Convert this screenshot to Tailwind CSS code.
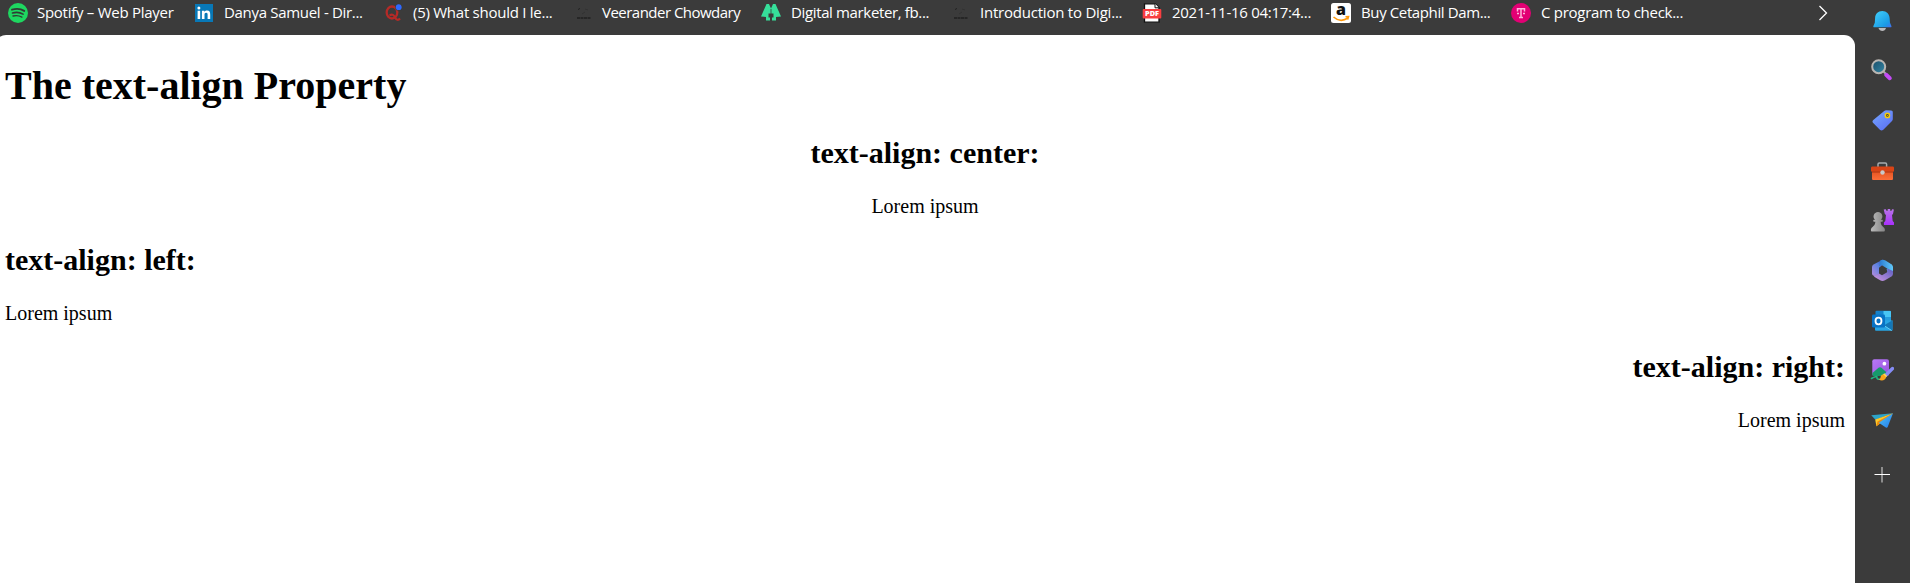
<!DOCTYPE html>
<html lang="en">
<head>
<meta charset="utf-8">
<title>The text-align Property</title>
<script src="https://cdn.jsdelivr.net/npm/@tailwindcss/browser@4"></script>
</head>
<body class="h-screen overflow-hidden bg-[#3b3b3b]">
<div class="flex h-full">
  <div class="flex w-[1855px] flex-col">
    <nav class="flex h-[35px] shrink-0 items-start pl-2 pt-[3px] font-['Open_Sans',sans-serif] text-[15px] leading-[18px] text-white whitespace-nowrap">
      <a class="flex w-[186px] gap-[9px]">
        <svg class="size-5 shrink-0" viewBox="0 0 20 20"><circle cx="10" cy="10" r="10" fill="#1ed760"/><g fill="none" stroke="#303b34" stroke-linecap="round"><path d="M4 6.700c4-1.200 9-.8 12.200 1.200" stroke-width="1.900"/><path d="M4.500 10c3.500-1 7.600-.6 10.600 1.100" stroke-width="1.600"/><path d="M5 13c3-.8 6.200-.5 8.900 1.100" stroke-width="1.300"/></g></svg>
        <span class="tracking-[-0.27px]">Spotify – Web Player</span>
      </a>
      <a class="flex w-[190px] gap-[10px]">
        <svg class="size-5 shrink-0" viewBox="0 0 20 20"><rect x="1" y="1" width="18" height="18" fill="#0878b7"/><g fill="#fff"><circle cx="4.900" cy="5" r="1.500"/><path d="M3.600 7.700h2.600V16H3.600zM7.900 7.700h2.500v1.200c.6-1 1.500-1.400 2.700-1.400 2.500 0 3.100 1.600 3.100 3.900V16h-2.600v-4.200c0-1.200-.2-2.100-1.400-2.100-1.300 0-1.700.9-1.700 2.100V16H7.900z"/></g></svg>
        <span class="tracking-[-0.31px]">Danya Samuel - Dir...</span>
      </a>
      <a class="flex w-[190px] gap-[9px]">
        <svg class="size-5 shrink-0" viewBox="0 0 20 20"><ellipse cx="8" cy="9.500" rx="5.300" ry="6" fill="none" stroke="#b52a27" stroke-width="2.300"/><path d="M5.500 12.500c3-2 4.500-.2 5.700 2.200 1.100 2.300 3 3.100 4.800.8" fill="none" stroke="#b52a27" stroke-width="2.100"/><circle cx="14.700" cy="4.200" r="3.500" fill="#3b3b3b"/><circle cx="14.700" cy="4.200" r="2.900" fill="#2e69ff"/></svg>
        <span class="tracking-[-0.26px]">(5) What should I le...</span>
      </a>
      <a class="flex w-[187px] gap-[8px]">
        <svg class="size-5 shrink-0" viewBox="0 0 20 20"><path d="M3 15h14" stroke="#202020" stroke-width="1.500" stroke-dasharray="3 .5"/><path d="M4 6.500l2-1" stroke="#202020"/><path d="M11 6l3 1M8 11l3-2" stroke="#323232"/></svg>
        <span class="tracking-[-0.52px]">Veerander Chowdary</span>
      </a>
      <a class="flex w-[191px] gap-[10px]">
        <svg class="size-5 shrink-0" viewBox="0 0 20 20"><path d="M5.500 1L8 1l2 4.500L12 1h2.500L20 13.500l-5 .5v3.500h-4v-3h1.500v-4H10L7.500 10.500v4H9v3H5V14l-5-.5z" fill="#36df9a"/><path d="M10 6v12" stroke="#3b3b3b" stroke-width=".8"/></svg>
        <span class="tracking-[-0.36px]">Digital marketer, fb...</span>
      </a>
      <a class="flex w-[190px] gap-[8px]">
        <svg class="size-5 shrink-0" viewBox="0 0 20 20"><path d="M2 15h14" stroke="#202020" stroke-width="1.500" stroke-dasharray="3 .5"/><path d="M3 6.500l2-1" stroke="#202020"/><path d="M10 6l3 1M7 11l3-2" stroke="#323232"/></svg>
        <span class="tracking-[-0.22px]">Introduction to Digi...</span>
      </a>
      <a class="flex w-[189px] gap-[10px]">
        <svg class="size-5 shrink-0" viewBox="0 0 20 20"><path d="M2.500.8h10.800l3.700 3.700v14.700H2.500z" fill="#fff" stroke="#111" stroke-width="1.300"/><path d="M13 .8v4h4" fill="#fff" stroke="#111"/><rect x=".7" y="6" width="18.600" height="9.500" rx="1" fill="#f93e40"/><text x="10" y="13.300" text-anchor="middle" textLength="14" lengthAdjust="spacingAndGlyphs" font-family="Open Sans" font-weight="800" font-size="7.200" fill="#fff">PDF</text></svg>
        <span class="tracking-[-0.27px]">2021-11-16 04:17:4...</span>
      </a>
      <a class="flex w-[180px] gap-[10px]">
        <svg class="size-5 shrink-0" viewBox="0 0 20 20"><rect width="20" height="20" rx="2.500" fill="#fff"/><text x="10" y="12.300" text-anchor="middle" font-family="Open Sans" font-weight="800" font-size="16" fill="#111">a</text><path d="M2.500 14c4.500 4 10 4 14.500 1M14.500 13.800l3-.2-.8 3" fill="none" stroke="#ff9a0c" stroke-width="1.600"/></svg>
        <span class="tracking-[-0.38px]">Buy Cetaphil Dam...</span>
      </a>
      <a class="flex w-[306px] gap-[10px]">
        <svg class="size-5 shrink-0" viewBox="0 0 20 20"><circle cx="10" cy="10" r="10" fill="#e20074"/><path d="M6.500 8.500V5.700h7v2.800M10 5.700v8.600M8 14.500h4" fill="none" stroke="#ffb4dc" stroke-width="1.500"/><path d="M6 10.500h2m4 0h2" stroke="#ffb4dc" stroke-width="1.600"/></svg>
        <span class="tracking-[-0.28px]">C program to check...</span>
      </a>
      <svg class="mt-[2px] h-4 w-3 shrink-0" viewBox="0 0 12 16"><path d="M2.500 1L9.500 8l-7 7" fill="none" stroke="#fff" stroke-width="1.300"/></svg>
    </nav>
    <main class="-ml-[5px] flex-1 rounded-t-[11px] bg-white px-[10px] pt-[28px] font-['Liberation_Serif',serif] text-xl leading-[23px] text-black">
      <h1 class="mb-[27px] text-[40px] font-bold leading-[46px]">The text-align Property</h1>
      <section class="mb-[25px] text-center">
        <h2 class="mb-[25px] text-3xl font-bold leading-[34px]">text-align: center:</h2>
        <p>Lorem ipsum</p>
      </section>
      <section class="mb-[25px] text-left">
        <h2 class="mb-[25px] text-3xl font-bold leading-[34px]">text-align: left:</h2>
        <p>Lorem ipsum</p>
      </section>
      <section class="text-right">
        <h2 class="mb-[25px] text-3xl font-bold leading-[34px]">text-align: right:</h2>
        <p>Lorem ipsum</p>
      </section>
    </main>
  </div>
  <aside class="flex w-[55px] flex-col gap-[26px] pl-[15px] pt-2">
    <svg class="size-6 shrink-0" viewBox="0 0 24 24"><defs><linearGradient id="bell" x1="0" y1="0" x2="1" y2="1"><stop stop-color="#43d2fc"/><stop offset=".75" stop-color="#1a9be6"/><stop offset="1" stop-color="#466df0"/></linearGradient></defs><path d="M8.500 20h7.500c-.5 1.900-2 3-3.700 3s-3.300-1.100-3.800-3z" fill="#b9b9bc"/><path d="M12.300 3c-4.400 0-7 3-7.200 7l-.3 4.700-1.400 3.200c-.3.800.1 1.400.9 1.400h16.200c.8 0 1.200-.6.9-1.400L20 14.700 19.600 10c-.3-4-3-7-7.300-7z" fill="url(#bell)"/></svg>
    <svg class="size-6 shrink-0" viewBox="0 0 24 24"><defs><linearGradient id="lens" x1="0" y1="0" x2="1" y2="1"><stop stop-color="#174c67"/><stop offset="1" stop-color="#3788a8"/></linearGradient></defs><path d="M12.500 12.500l4 4" stroke="#aaa" stroke-width="2"/><path d="M16.200 16.800l3.600 3.400" stroke="#c34bf5" stroke-width="4" stroke-linecap="round"/><circle cx="8.700" cy="8.700" r="6.500" fill="url(#lens)" stroke="#b8b5b2" stroke-width="2"/></svg>
    <svg class="size-6 shrink-0" viewBox="0 0 24 24"><defs><linearGradient id="tag" x1="0" y1="0" x2=".8" y2="1"><stop stop-color="#77a9ff"/><stop offset="1" stop-color="#5b70f4"/></linearGradient></defs><path d="M14.200 2.900c.6-.4 1.100-.6 1.900-.6l5 .3c1.100.1 1.700.8 1.700 1.800v6.500c0 .8-.2 1.400-.8 2l-8.700 8.800c-1.200 1.100-2.300 1.100-3.400 0l-6.700-6.600c-1-1-1-2.100.1-3z" fill="url(#tag)"/><circle cx="17.400" cy="7.400" r="2.100" fill="#3c3c34" stroke="#f5ca0d" stroke-width="1.500"/><circle cx="17.400" cy="7.400" r=".7" fill="#bba61e"/></svg>
    <svg class="size-6 shrink-0" viewBox="0 0 24 24"><defs><linearGradient id="box" x1="0" y1="0" x2="0" y2="1"><stop stop-color="#e2501e"/><stop offset="1" stop-color="#fb6e39"/></linearGradient></defs><path d="M8 9V6.300c0-.9.500-1.300 1.300-1.300h6c.8 0 1.300.4 1.300 1.300V9" fill="none" stroke="#a7acae" stroke-width="1.500"/><path d="M2 12h21v8.500c0 1-.5 1.500-1.500 1.500h-18C2.500 22 2 21.500 2 20.500z" fill="url(#box)"/><path d="M1 10c0-1 .5-1.500 1.500-1.500h20c1 0 1.500.5 1.500 1.500v3.500H1z" fill="#d84416"/><path d="M2 14h21" stroke="#a83210"/><circle cx="12.500" cy="14.500" r="2.200" fill="#c8c8c8"/></svg>
    <svg class="size-6 shrink-0" viewBox="0 0 24 24"><defs><linearGradient id="pawn"><stop stop-color="#bbb"/><stop offset="1" stop-color="#858585"/></linearGradient><linearGradient id="rook" x1="0" y1="0" x2="0" y2="1"><stop stop-color="#b875e9"/><stop offset="1" stop-color="#a930fc"/></linearGradient></defs><path d="M13.700 1.500l2.200-.3.500 1.500h1.300V1h2.500v1.700h1.300l.6-1.500 1.800.3-.9 4.500-1 1 .7 6 1.300 1.500v1.900c0 .4-.3.600-.6.600h-9c-.4 0-.5-.3-.5-.6v-1.900l1.400-1.500.7-6-1.200-1z" fill="url(#rook)"/><path d="M5.200 11.800C2 9.500 3.800 4 8 4s6 5.500 2.800 7.800h1.300c1 0 1 2 0 2h-1.500c.2 2.600 1 4 2.900 5.400.9.700 1.400 1.600 1.400 2.800 0 1-.4 1.500-1.400 1.500H2.300c-1 0-1.400-.5-1.400-1.500 0-1.200.5-2.100 1.400-2.800 1.900-1.400 2.900-2.800 3.100-5.400H4c-1 0-1-2 0-2z" fill="url(#pawn)"/></svg>
    <svg class="size-6 shrink-0" viewBox="0 0 24 24"><defs><linearGradient id="ma" x1="1" y1="0" x2="0" y2="1"><stop stop-color="#3046a8"/><stop offset=".45" stop-color="#5b82e0"/><stop offset="1" stop-color="#b58bdd"/></linearGradient><linearGradient id="mb"><stop stop-color="#2979d0"/><stop offset="1" stop-color="#61c9fa"/></linearGradient><linearGradient id="mc" x1="0" y1="1" x2="1" y2="0"><stop stop-color="#d09ae2"/><stop offset="1" stop-color="#5a5cc0"/></linearGradient></defs><path d="M13 1.500L4 6.300C2.700 7 2 8 2 9.500v6c0 2 2.200 3.200 4 2.200l3-1.700V9.800L15 5z" fill="url(#ma)"/><path d="M10.200 2.600c1.600-1.100 3.100-1.300 4.800-.3l6 3.600c1.200.7 2 1.900 2 3.300v6l-3.500 2-3-5.800 1-.6-6-3.800-2.300 1.400z" fill="url(#mb)"/><path d="M17.300 10.500L23 13v2.500c0 1.500-.7 2.500-2 3.300L15 22.300c-1.700 1-3.200 1-4.900 0L3.800 18.500l5.200-3 3 1.800 4.300-2.500c.8-.4 1-1 1-1.800z" fill="url(#mc)"/></svg>
    <svg class="size-6 shrink-0" viewBox="0 0 24 24"><rect x="5.500" y="2.800" width="15.500" height="14" rx="1" fill="#1683cb"/><path d="M13.500 3h6.500c.6 0 1 .4 1 1v6h-7.500z" fill="#48c5f4"/><path d="M13.500 9H21v7h-7.500z" fill="#259cdd"/><path d="M5 12l17.500.5v9c0 .8-.5 1.300-1.300 1.300H6.300c-.8 0-1.300-.5-1.300-1.300z" fill="#28a6e5"/><path d="M22.500 12.200l-8.700 5.300 8.500 5c.2-.2.200-.5.200-.9z" fill="#1477b7"/><path d="M14 17.500l7.600 5" stroke="#61cdf5"/><rect x="2" y="6.500" width="13" height="13" rx="1.200" fill="#0873c5"/><ellipse cx="8.500" cy="13" rx="3" ry="3.300" fill="none" stroke="#fff" stroke-width="1.800"/></svg>
    <svg class="size-6 shrink-0" viewBox="0 0 24 24"><defs><linearGradient id="pic" x1="0" y1="0" x2="1" y2="1"><stop stop-color="#b878f8"/><stop offset="1" stop-color="#9654dc"/></linearGradient></defs><rect x="2.300" y="1.300" width="16.700" height="16.700" rx="2" fill="url(#pic)"/><path d="M2.500 15l6-5.200c1-.9 2-.9 3 0l6 5.500v1.200c0 1-.5 1.500-1.500 1.500H4c-1 0-1.500-.5-1.500-1.500z" fill="#179a6b"/><circle cx="14.400" cy="5.700" r="1.900" fill="#fff"/><path d="M1.500 20.500c3-2 6-2.500 5.500-1s1 2 4 1.500" fill="none" stroke="#20b681" stroke-width="1.600" stroke-linecap="round"/><path d="M15.500 17.500l7-7" stroke="#858cf5" stroke-width="3.300" stroke-linecap="round"/><path d="M13.400 16.200l2.800 2.800" stroke="#ffda4f" stroke-width="2.500"/><path d="M13.500 16.400c-2.300 0-2.800 1.500-3 3-.1 1-.7 1.700-1.700 2.200 2.700 1.700 7 .9 7.200-2.600z" fill="#f8a51c"/></svg>
    <svg class="size-6 shrink-0" viewBox="0 0 24 24"><defs><linearGradient id="plane" x1="0" y1="0" x2="1" y2="1"><stop stop-color="#50c8f6"/><stop offset="1" stop-color="#2277e8"/></linearGradient></defs><path d="M1.200 7.200L23 5.200 5.500 11.700z" fill="#2da4c8"/><path d="M23 5.300L5.200 11.500l1.200 6.800z" fill="#ffca28"/><path d="M23 5.300L7.500 13.500l-1.200 4.900 3.600-3z" fill="#e98b10"/><path d="M23 5.300L8.800 14.800l7 4.800c.8.500 1.500.3 1.900-.5z" fill="url(#plane)"/></svg>
    <svg class="mt-[5px] size-6 shrink-0" viewBox="0 0 24 24"><path d="M12 4v15.500" stroke="#aaa" stroke-width="1.500"/><path d="M4.500 11.500h15.500" stroke="#fff"/></svg>
  </aside>
</div>
</body>
</html>
